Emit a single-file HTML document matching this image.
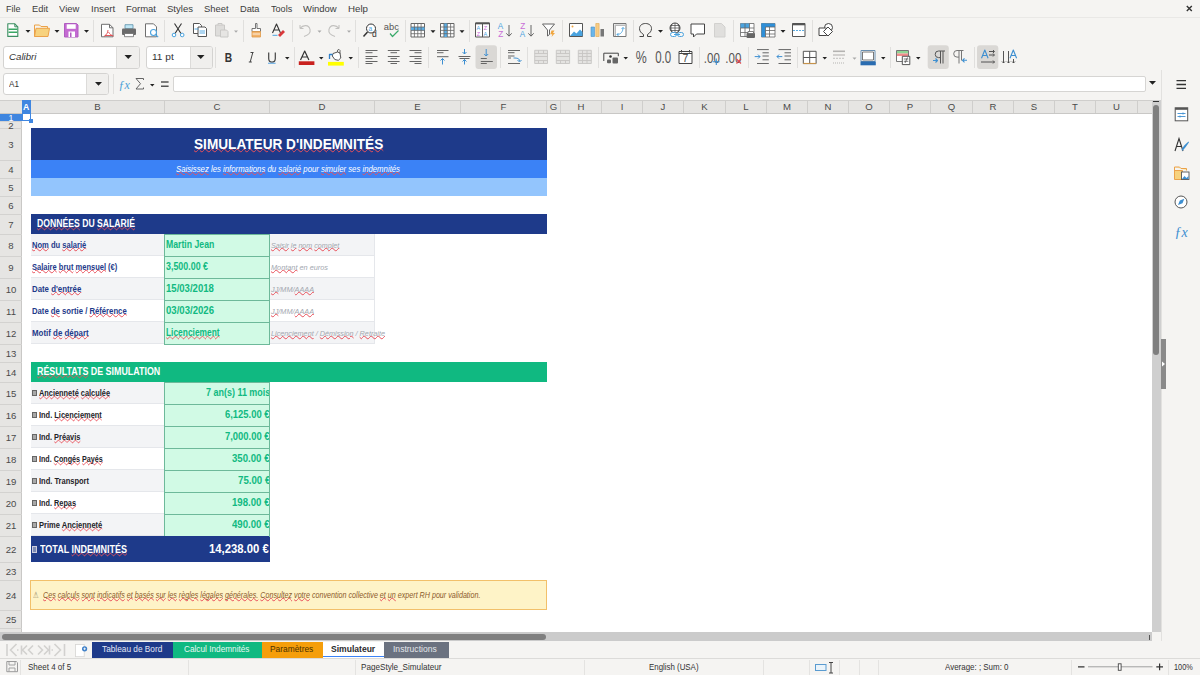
<!DOCTYPE html><html><head><meta charset="utf-8"><style>*{margin:0;padding:0;box-sizing:border-box}html,body{width:1200px;height:675px;overflow:hidden;background:#f5f4f2;font-family:"Liberation Sans",sans-serif;position:relative}.a{position:absolute}.t{position:absolute;white-space:nowrap;transform-origin:0 0}.u{text-decoration:underline wavy #e8505a;text-decoration-thickness:1px;text-underline-offset:-1px;text-decoration-skip-ink:none}svg{position:absolute;overflow:visible}</style></head><body>
<div class="a" style="left:0px;top:17px;width:1200px;height:1px;background:#e9e8e6"></div>
<div class="a" style="left:3px;top:45.5px;width:136.5px;height:23.0px;background:#fff;border:1px solid #d4d3d1;border-radius:3px"></div>
<div class="a" style="left:116px;top:46.5px;width:22.5px;height:21.0px;background:#f0efed;border-left:1px solid #dcdbd9;border-radius:0 2px 2px 0"></div>
<div class="a" style="left:146px;top:45.5px;width:66.5px;height:23.0px;background:#fff;border:1px solid #d4d3d1;border-radius:3px"></div>
<div class="a" style="left:189.5px;top:46.5px;width:22.0px;height:21.0px;background:#f0efed;border-left:1px solid #dcdbd9;border-radius:0 2px 2px 0"></div>
<div class="a" style="left:3.3px;top:72.7px;width:106.2px;height:22.299999999999997px;background:#fff;border:1px solid #d4d3d1;border-radius:3px"></div>
<div class="a" style="left:86.3px;top:73.7px;width:22.200000000000003px;height:20.299999999999997px;background:#f0efed;border-left:1px solid #dcdbd9;border-radius:0 2px 2px 0"></div>
<div class="a" style="left:173.3px;top:76.3px;width:972.7px;height:16.200000000000003px;background:#fff;border:1px solid #d6d5d3;border-radius:2px"></div>
<div class="a" style="left:22px;top:114px;width:1130px;height:518px;background:#fff"></div>
<div class="a" style="left:0px;top:100px;width:1152px;height:14px;background:#e6e5e3;border-top:1px solid #cfcecc;border-bottom:1px solid #c9c8c6"></div>
<div class="a" style="left:30px;top:101px;width:1px;height:12px;background:#cfcecc"></div>
<div class="a" style="left:22px;top:100px;width:9px;height:14px;background:#3f86e0"></div>
<div class="a" style="left:164px;top:101px;width:1px;height:12px;background:#cfcecc"></div>
<div class="a" style="left:269px;top:101px;width:1px;height:12px;background:#cfcecc"></div>
<div class="a" style="left:374px;top:101px;width:1px;height:12px;background:#cfcecc"></div>
<div class="a" style="left:460px;top:101px;width:1px;height:12px;background:#cfcecc"></div>
<div class="a" style="left:546px;top:101px;width:1px;height:12px;background:#cfcecc"></div>
<div class="a" style="left:560px;top:101px;width:1px;height:12px;background:#cfcecc"></div>
<div class="a" style="left:601px;top:101px;width:1px;height:12px;background:#cfcecc"></div>
<div class="a" style="left:642px;top:101px;width:1px;height:12px;background:#cfcecc"></div>
<div class="a" style="left:683px;top:101px;width:1px;height:12px;background:#cfcecc"></div>
<div class="a" style="left:725px;top:101px;width:1px;height:12px;background:#cfcecc"></div>
<div class="a" style="left:766px;top:101px;width:1px;height:12px;background:#cfcecc"></div>
<div class="a" style="left:807px;top:101px;width:1px;height:12px;background:#cfcecc"></div>
<div class="a" style="left:848px;top:101px;width:1px;height:12px;background:#cfcecc"></div>
<div class="a" style="left:889px;top:101px;width:1px;height:12px;background:#cfcecc"></div>
<div class="a" style="left:930px;top:101px;width:1px;height:12px;background:#cfcecc"></div>
<div class="a" style="left:972px;top:101px;width:1px;height:12px;background:#cfcecc"></div>
<div class="a" style="left:1013px;top:101px;width:1px;height:12px;background:#cfcecc"></div>
<div class="a" style="left:1054px;top:101px;width:1px;height:12px;background:#cfcecc"></div>
<div class="a" style="left:1095px;top:101px;width:1px;height:12px;background:#cfcecc"></div>
<div class="a" style="left:1137px;top:101px;width:1px;height:12px;background:#cfcecc"></div>
<div class="a" style="left:0px;top:114px;width:22px;height:518px;background:#e6e5e3;border-right:1px solid #c9c8c6"></div>
<div class="a" style="left:0px;top:121px;width:22px;height:1px;background:#d3d2d0"></div>
<div class="a" style="left:0px;top:114px;width:22px;height:7px;background:#3f86e0"></div>
<div class="a" style="left:0px;top:128px;width:22px;height:1px;background:#d3d2d0"></div>
<div class="a" style="left:0px;top:160px;width:22px;height:1px;background:#d3d2d0"></div>
<div class="a" style="left:0px;top:178px;width:22px;height:1px;background:#d3d2d0"></div>
<div class="a" style="left:0px;top:196px;width:22px;height:1px;background:#d3d2d0"></div>
<div class="a" style="left:0px;top:214px;width:22px;height:1px;background:#d3d2d0"></div>
<div class="a" style="left:0px;top:234px;width:22px;height:1px;background:#d3d2d0"></div>
<div class="a" style="left:0px;top:256px;width:22px;height:1px;background:#d3d2d0"></div>
<div class="a" style="left:0px;top:278px;width:22px;height:1px;background:#d3d2d0"></div>
<div class="a" style="left:0px;top:300px;width:22px;height:1px;background:#d3d2d0"></div>
<div class="a" style="left:0px;top:322px;width:22px;height:1px;background:#d3d2d0"></div>
<div class="a" style="left:0px;top:344px;width:22px;height:1px;background:#d3d2d0"></div>
<div class="a" style="left:0px;top:362px;width:22px;height:1px;background:#d3d2d0"></div>
<div class="a" style="left:0px;top:382px;width:22px;height:1px;background:#d3d2d0"></div>
<div class="a" style="left:0px;top:404px;width:22px;height:1px;background:#d3d2d0"></div>
<div class="a" style="left:0px;top:426px;width:22px;height:1px;background:#d3d2d0"></div>
<div class="a" style="left:0px;top:448px;width:22px;height:1px;background:#d3d2d0"></div>
<div class="a" style="left:0px;top:470px;width:22px;height:1px;background:#d3d2d0"></div>
<div class="a" style="left:0px;top:492px;width:22px;height:1px;background:#d3d2d0"></div>
<div class="a" style="left:0px;top:514px;width:22px;height:1px;background:#d3d2d0"></div>
<div class="a" style="left:0px;top:536px;width:22px;height:1px;background:#d3d2d0"></div>
<div class="a" style="left:0px;top:562px;width:22px;height:1px;background:#d3d2d0"></div>
<div class="a" style="left:0px;top:580px;width:22px;height:1px;background:#d3d2d0"></div>
<div class="a" style="left:0px;top:610px;width:22px;height:1px;background:#d3d2d0"></div>
<div class="a" style="left:0px;top:628px;width:22px;height:1px;background:#d3d2d0"></div>
<div class="a" style="left:22px;top:114px;width:9px;height:7px;border:1px solid #3f86e0;border-top:none"></div>
<div class="a" style="left:29px;top:119px;width:4px;height:4px;background:#3f86e0"></div>
<div class="a" style="left:31px;top:128px;width:516px;height:32px;background:#1e3a8a"></div>
<div class="a" style="left:31px;top:160px;width:516px;height:18px;background:#3b82f6"></div>
<div class="a" style="left:31px;top:178px;width:516px;height:18px;background:#93c5fd"></div>
<div class="a" style="left:31px;top:214px;width:516px;height:20px;background:#1e3a8a"></div>
<div class="a" style="left:31px;top:234px;width:133.5px;height:22px;background:#f3f4f6;border-bottom:1px solid #e5e7eb"></div>
<div class="a" style="left:269.5px;top:234px;width:105.5px;height:22px;background:#f3f4f6;border-bottom:1px solid #e5e7eb;border-right:1px solid #e5e7eb"></div>
<div class="a" style="left:164px;top:234px;width:106px;height:23px;background:#d1fae5;border:1px solid #6db99a"></div>
<div class="a" style="left:31px;top:256px;width:133.5px;height:22px;background:#fff;border-bottom:1px solid #e5e7eb"></div>
<div class="a" style="left:269.5px;top:256px;width:105.5px;height:22px;background:#fff;border-bottom:1px solid #e5e7eb;border-right:1px solid #e5e7eb"></div>
<div class="a" style="left:164px;top:256px;width:106px;height:23px;background:#d1fae5;border:1px solid #6db99a"></div>
<div class="a" style="left:31px;top:278px;width:133.5px;height:22px;background:#f3f4f6;border-bottom:1px solid #e5e7eb"></div>
<div class="a" style="left:269.5px;top:278px;width:105.5px;height:22px;background:#f3f4f6;border-bottom:1px solid #e5e7eb;border-right:1px solid #e5e7eb"></div>
<div class="a" style="left:164px;top:278px;width:106px;height:23px;background:#d1fae5;border:1px solid #6db99a"></div>
<div class="a" style="left:31px;top:300px;width:133.5px;height:22px;background:#fff;border-bottom:1px solid #e5e7eb"></div>
<div class="a" style="left:269.5px;top:300px;width:105.5px;height:22px;background:#fff;border-bottom:1px solid #e5e7eb;border-right:1px solid #e5e7eb"></div>
<div class="a" style="left:164px;top:300px;width:106px;height:23px;background:#d1fae5;border:1px solid #6db99a"></div>
<div class="a" style="left:31px;top:322px;width:133.5px;height:22px;background:#f3f4f6;border-bottom:1px solid #e5e7eb"></div>
<div class="a" style="left:269.5px;top:322px;width:105.5px;height:22px;background:#f3f4f6;border-bottom:1px solid #e5e7eb;border-right:1px solid #e5e7eb"></div>
<div class="a" style="left:164px;top:322px;width:106px;height:23px;background:#d1fae5;border:1px solid #6db99a"></div>
<div class="a" style="left:31px;top:362px;width:516px;height:20px;background:#10b981"></div>
<div class="a" style="left:31px;top:382px;width:133.5px;height:22px;background:#f3f4f6;border-bottom:1px solid #e5e7eb"></div>
<div class="a" style="left:164px;top:382px;width:106px;height:23px;background:#d1fae5;border:1px solid #6db99a"></div>
<div class="a" style="left:32px;top:389.5px;width:5px;height:6.5px;border:1px solid #666;background:#a8a8a8"></div>
<div class="a" style="left:31px;top:404px;width:133.5px;height:22px;background:#fff;border-bottom:1px solid #e5e7eb"></div>
<div class="a" style="left:164px;top:404px;width:106px;height:23px;background:#d1fae5;border:1px solid #6db99a"></div>
<div class="a" style="left:32px;top:411.5px;width:5px;height:6.5px;border:1px solid #666;background:#a8a8a8"></div>
<div class="a" style="left:31px;top:426px;width:133.5px;height:22px;background:#f3f4f6;border-bottom:1px solid #e5e7eb"></div>
<div class="a" style="left:164px;top:426px;width:106px;height:23px;background:#d1fae5;border:1px solid #6db99a"></div>
<div class="a" style="left:32px;top:433.5px;width:5px;height:6.5px;border:1px solid #666;background:#a8a8a8"></div>
<div class="a" style="left:31px;top:448px;width:133.5px;height:22px;background:#fff;border-bottom:1px solid #e5e7eb"></div>
<div class="a" style="left:164px;top:448px;width:106px;height:23px;background:#d1fae5;border:1px solid #6db99a"></div>
<div class="a" style="left:32px;top:455.5px;width:5px;height:6.5px;border:1px solid #666;background:#a8a8a8"></div>
<div class="a" style="left:31px;top:470px;width:133.5px;height:22px;background:#f3f4f6;border-bottom:1px solid #e5e7eb"></div>
<div class="a" style="left:164px;top:470px;width:106px;height:23px;background:#d1fae5;border:1px solid #6db99a"></div>
<div class="a" style="left:32px;top:477.5px;width:5px;height:6.5px;border:1px solid #666;background:#a8a8a8"></div>
<div class="a" style="left:31px;top:492px;width:133.5px;height:22px;background:#fff;border-bottom:1px solid #e5e7eb"></div>
<div class="a" style="left:164px;top:492px;width:106px;height:23px;background:#d1fae5;border:1px solid #6db99a"></div>
<div class="a" style="left:32px;top:499.5px;width:5px;height:6.5px;border:1px solid #666;background:#a8a8a8"></div>
<div class="a" style="left:31px;top:514px;width:133.5px;height:22px;background:#f3f4f6;border-bottom:1px solid #e5e7eb"></div>
<div class="a" style="left:164px;top:514px;width:106px;height:23px;background:#d1fae5;border:1px solid #6db99a"></div>
<div class="a" style="left:32px;top:521.5px;width:5px;height:6.5px;border:1px solid #666;background:#a8a8a8"></div>
<div class="a" style="left:31px;top:536px;width:239px;height:26px;background:#1e3a8a"></div>
<div class="a" style="left:32px;top:546px;width:5px;height:7px;border:1px solid #ccd;background:#7d8bb5"></div>
<div class="a" style="left:30px;top:580px;width:517px;height:30px;background:#fef3c7;border:1px solid #f2c06a"></div>
<div class="a" style="left:1152px;top:100px;width:9px;height:532px;background:#cfcfcf"></div>
<div class="a" style="left:1161px;top:70px;width:1px;height:588px;background:#e2e1df"></div>
<div class="a" style="left:1153px;top:101px;width:6px;height:1px;background:#333"></div>
<div class="a" style="left:1153px;top:105px;width:6px;height:250px;background:#7f7f7f;border-radius:3px"></div>
<div class="a" style="left:0px;top:632px;width:1151.5px;height:10px;background:#cbcbcb"></div>
<div class="a" style="left:2px;top:634px;width:544px;height:6px;background:#7f7f7f;border-radius:3px"></div>
<div class="a" style="left:1148.5px;top:635px;width:1.5px;height:5px;background:#555"></div>
<div class="a" style="left:0px;top:641px;width:1162px;height:17px;background:#f5f4f2"></div>
<div class="a" style="left:92px;top:641.8px;width:81px;height:15.900000000000091px;background:#1e3a8a"></div>
<div class="a" style="left:173px;top:641.8px;width:89px;height:15.900000000000091px;background:#10b981"></div>
<div class="a" style="left:262px;top:641.8px;width:60.5px;height:15.900000000000091px;background:#f59e0b"></div>
<div class="a" style="left:322.5px;top:641.8px;width:61.25px;height:15.900000000000091px;background:#fff"></div>
<div class="a" style="left:383.75px;top:641.8px;width:65.0px;height:15.900000000000091px;background:#6b7280"></div>
<div class="a" style="left:322.5px;top:655.8px;width:61.25px;height:1.6000000000000227px;background:#3b82f6"></div>
<div class="a" style="left:0px;top:658px;width:1200px;height:17px;background:#f5f4f2;border-top:1px solid #dcdbd9"></div>
<div class="a" style="left:20px;top:660px;width:1px;height:15px;background:#e4e3e1"></div>
<div class="a" style="left:188px;top:660px;width:1px;height:15px;background:#e4e3e1"></div>
<div class="a" style="left:355px;top:660px;width:1px;height:15px;background:#e4e3e1"></div>
<div class="a" style="left:583.75px;top:660px;width:1.0px;height:15px;background:#e4e3e1"></div>
<div class="a" style="left:762.5px;top:660px;width:1.0px;height:15px;background:#e4e3e1"></div>
<div class="a" style="left:808.75px;top:660px;width:1.0px;height:15px;background:#e4e3e1"></div>
<div class="a" style="left:838.75px;top:660px;width:1.0px;height:15px;background:#e4e3e1"></div>
<div class="a" style="left:858.75px;top:660px;width:1.0px;height:15px;background:#e4e3e1"></div>
<div class="a" style="left:877.5px;top:660px;width:1.0px;height:15px;background:#e4e3e1"></div>
<div class="a" style="left:1071.25px;top:660px;width:1.0px;height:15px;background:#e4e3e1"></div>
<div class="a" style="left:1167.5px;top:660px;width:1.0px;height:15px;background:#e4e3e1"></div>
<div class="a" style="left:1162px;top:70px;width:38px;height:588px;background:#f5f4f2"></div>
<svg style="left:0;top:0" width="1200" height="100" viewBox="0 0 1200 100">
<g fill="none" stroke-linejoin="round">
<!-- separators toolbar 1 -->
<g stroke="#e0dfdd" stroke-width="1">
<path d="M93.5 20V42M164.5 20V42M243.5 20V42M292.5 20V42M355.5 20V42M405.5 20V42M469.5 20V42M562.5 20V42M633.5 20V42M733.5 20V42M812.5 20V42"/>
<path d="M215.5 47V68M294.5 47V68M358.5 47V68M428.5 47V68M500.5 47V68M527.5 47V68M598.5 47V68M699.5 47V68M748.5 47V68M797.5 47V68M890.5 47V68M974.5 47V68"/>
<path d="M113.5 74V94"/>
</g>


<!-- dropdown arrows (black) -->
<g fill="#222" stroke="none">
<path d="M25.5 30h5l-2.5 2.7z M54.5 30h5l-2.5 2.7z M84 30h5l-2.5 2.7z M430.5 30.3h5l-2.5 2.7z M459.5 30.3h5l-2.5 2.7z M658 30h5l-2.5 2.7z M780.5 30h5l-2.5 2.7z"/>
<path d="M285 57h4.5l-2.25 2.5z M319 57h4.5l-2.25 2.5z M348.5 57h4.5l-2.25 2.5z M623.5 57h4.5l-2.25 2.5z M822.5 57h4.5l-2.25 2.5z M881 57h4.5l-2.25 2.5z M916 57h4.5l-2.25 2.5z"/>
<path d="M124.5 55h7.5l-3.75 4z M197 55h7.5l-3.75 4z M95 82h7l-3.5 3.8z M150 84h4.5l-2.25 2.5z M1149 81h7l-3.5 3.8z"/>
</g>
<g fill="#aaa" stroke="none"><path d="M234 30.5h4l-2 2.3z M317.5 30.5h4l-2 2.3z M347 30.5h4l-2 2.3z M852.5 57.5h4l-2 2.3z"/></g>

<!-- New spreadsheet -->
<path d="M7.8 23.8h7l3 3v9.6h-10z" fill="#fff" stroke="#3d8f62" stroke-width="1.1"/>
<path d="M14.8 23.8v3h3" stroke="#3d8f62" stroke-width="1"/>
<path d="M8.5 28.5h8.8v1.6h-8.8zM8.5 31.5h8.8v1.6h-8.8z" fill="#3aa864" stroke="none"/>
<!-- Open folder -->
<path d="M34.5 25h5l1.5 1.5h6.5v2.5" fill="#fdf0cc" stroke="#eba24a" stroke-width="1"/>
<path d="M34.5 25v11.5h13.5l1.5-8.2h-13.5l-1.5 8.2" fill="#f7d27e" stroke="#eba24a" stroke-width="1"/>
<!-- Save -->
<path d="M64.5 23.5h12l1.5 1.5v12h-13.5z" fill="#c46ad2" stroke="#b05cc0" stroke-width="1"/>
<rect x="66.7" y="24.3" width="9" height="4.5" fill="#fff" stroke="none"/>
<rect x="68.5" y="31.5" width="6.5" height="5.5" fill="#fff" stroke="none"/>
<rect x="70" y="32.5" width="1.5" height="4.5" fill="#b05cc0" stroke="none"/>
<!-- PDF -->
<path d="M101.5 24.3h8l3.5 3.5v9h-11.5z" fill="#fff" stroke="#6f6f6f" stroke-width="1"/>
<path d="M109.5 24.3v3.5h3.5" stroke="#6f6f6f"/>
<path d="M108 30c0 3-2 5-4 6.5M108.5 32c1 2 3 3.5 5 4M105 35.5h7" stroke="#e0474c" stroke-width="0.9"/>
<!-- Print -->
<rect x="125" y="24.7" width="8" height="4" fill="#bfe6f5" stroke="#5a8fa8" stroke-width="0.8"/>
<rect x="122" y="28.5" width="14" height="6.5" rx="1" fill="#6b6b6b" stroke="none"/>
<rect x="124.5" y="33.5" width="9" height="3.2" fill="#fff" stroke="#6b6b6b" stroke-width="0.8"/>
<!-- Print preview -->
<path d="M145.5 23.8h8l3 3v10h-11z" fill="#fff" stroke="#6f6f6f" stroke-width="1"/>
<circle cx="153.5" cy="32.5" r="3" fill="#fff" stroke="#4aa3df" stroke-width="1.1"/>
<path d="M155.6 34.6l2.6 2.6" stroke="#4aa3df" stroke-width="1.2"/>
<!-- Cut -->
<path d="M174.5 23.5l6.5 10M181.5 23.5l-6.5 10" stroke="#333" stroke-width="1.1"/>
<circle cx="174" cy="35" r="1.8" fill="#fff" stroke="#4aa3df" stroke-width="1"/>
<circle cx="182.2" cy="35" r="1.8" fill="#fff" stroke="#4aa3df" stroke-width="1"/>
<!-- Copy -->
<path d="M193.5 23.5h6l2 2v8h-8z" fill="#fff" stroke="#555" stroke-width="1"/>
<path d="M198 27h7l1.5 1.5v8h-8.5z" fill="#fff" stroke="#555" stroke-width="1"/>
<path d="M194.5 29h4M199.5 31h5.5M199.5 33h5.5" stroke="#4aa3df" stroke-width="0.9"/>
<!-- Paste disabled -->
<path d="M215.5 25h9v11h-9z" fill="#dedddb" stroke="#c9c8c6" stroke-width="1"/>
<path d="M220.5 30h6l1.5 1.5v5.5h-7.5z" fill="#e6e5e3" stroke="#c9c8c6" stroke-width="1"/>
<path d="M218 25v-1.5h4v1.5" stroke="#c9c8c6"/>
<!-- Clone brush -->
<path d="M255.5 23.5h1.5v5h3.5v3h-8.5v-3h3.5z" fill="#fff" stroke="#666" stroke-width="0.9"/>
<path d="M252 31.5h8.5v5.5h-8.5z" fill="#f2b36b" stroke="#e09a4a" stroke-width="0.8"/>
<path d="M252.5 34h7.5" stroke="#fff" stroke-width="0.8"/>
<!-- Clear formatting -->
<path d="M272.5 33l4-9 4 9M274 30h5" stroke="#333" stroke-width="1.1"/>
<path d="M272.5 35.3h5" stroke="#4aa3df" stroke-width="1"/>
<path d="M278 35l5-5 2 2-5 5z" fill="#d9383a" stroke="none"/>
<!-- Undo / redo disabled -->
<path d="M300 28.5c3-4 9-4 10 1 1 4-3 6-6 7M300 28.5v-3.5M300 28.5h3.5" stroke="#c2c1bf" stroke-width="1.1"/>
<path d="M339 28.5c-3-4-9-4-10 1-1 4 3 6 6 7M339 28.5v-3.5M339 28.5h-3.5" stroke="#c2c1bf" stroke-width="1.1"/>
<!-- Find & replace -->
<circle cx="371" cy="28.5" r="4.5" fill="#fff" stroke="#333" stroke-width="1"/>
<text x="368.6" y="31" font-size="6.5" fill="#4aa3df" stroke="none" font-family="Liberation Sans">a</text>
<path d="M367.5 32l-4 4.5" stroke="#333" stroke-width="1.5"/>
<text x="372" y="37.2" font-size="8.5" fill="#333" stroke="none" font-family="Liberation Sans">d</text>
<!-- Spelling -->
<text x="383.8" y="30.3" font-size="8.8" fill="#555" stroke="none" font-family="Liberation Sans" textLength="15" lengthAdjust="spacingAndGlyphs">abc</text>
<path d="M390 33.5l2.5 3 6-6" stroke="#3aaa6a" stroke-width="1.2"/>
<!-- Rows table -->
<g stroke="#666" stroke-width="0.8">
<rect x="411" y="23.5" width="13.5" height="13.5" fill="#fff" stroke-width="1"/>
<rect x="411" y="27" width="13.5" height="3.4" fill="#5cb0e8" stroke="none"/>
<path d="M411 27H424.5M411 30.4H424.5M411 33.7H424.5M414.4 23.5V37M417.8 23.5V37M421.1 23.5V37" />
</g>
<!-- Cols table -->
<g stroke="#666" stroke-width="0.8">
<rect x="440.5" y="23.5" width="13.5" height="13.5" fill="#fff" stroke-width="1"/>
<rect x="443.9" y="23.5" width="3.4" height="13.5" fill="#5cb0e8" stroke="none"/>
<path d="M440.5 27H454M440.5 30.4H454M440.5 33.7H454M443.9 23.5V37M447.3 23.5V37M450.6 23.5V37"/>
</g>
<!-- Sort -->
<rect x="475.5" y="23" width="14" height="14" fill="#fff" stroke="#555" stroke-width="1"/>
<rect x="475.5" y="22.5" width="14" height="1.8" fill="#555" stroke="none"/>
<path d="M482.5 23v14" stroke="#555"/>
<text x="476.5" y="29.5" font-size="5.5" fill="#4aa3df" stroke="none" font-family="Liberation Sans">A</text>
<text x="476.7" y="35.5" font-size="5.5" fill="#c86dd7" stroke="none" font-family="Liberation Sans">Z</text>
<text x="483.7" y="29.5" font-size="5.5" fill="#c86dd7" stroke="none" font-family="Liberation Sans">Z</text>
<text x="483.5" y="35.5" font-size="5.5" fill="#4aa3df" stroke="none" font-family="Liberation Sans">A</text>
<!-- Sort asc -->
<text x="497.8" y="29.2" font-size="8.2" fill="#4aa3df" stroke="none" font-family="Liberation Sans">A</text>
<text x="498.2" y="36.7" font-size="8.2" fill="#c86dd7" stroke="none" font-family="Liberation Sans">Z</text>
<path d="M509 25v11M506.3 33.3l2.7 2.9 2.7-2.9" stroke="#555" stroke-width="0.9"/>
<!-- Sort desc -->
<text x="520.2" y="29.2" font-size="8.2" fill="#c86dd7" stroke="none" font-family="Liberation Sans">Z</text>
<text x="519.8" y="36.7" font-size="8.2" fill="#4aa3df" stroke="none" font-family="Liberation Sans">A</text>
<path d="M531 25v11M528.3 33.3l2.7 2.9 2.7-2.9" stroke="#555" stroke-width="0.9"/>
<!-- Autofilter -->
<path d="M542.5 24h12l-5 6v4.5l-2 1.5v-6z" fill="#fff" stroke="#666" stroke-width="1"/>
<path d="M551.5 30.5l3 0-1.5 2.5 2 0-3.5 4 .8-2.8h-2z" fill="#f0a640" stroke="none"/>
<!-- Image -->
<rect x="569.5" y="23.5" width="13" height="13" fill="#fff" stroke="#555" stroke-width="1"/>
<circle cx="572.5" cy="26.5" r="1" fill="#f0a640" stroke="none"/>
<path d="M570 36l4-4.5 2.5 2 3.5-4 2.5 2.5v4z" fill="#4aa3df" stroke="none"/>
<!-- Chart -->
<rect x="591" y="27" width="3.5" height="9.5" fill="#6ab6ea" stroke="#4a90c8" stroke-width="0.6"/>
<rect x="595.8" y="23.5" width="3.3" height="13" fill="#f7cd86" stroke="#e3a850" stroke-width="0.6"/>
<rect x="600.5" y="29" width="3.5" height="7.5" fill="#777" stroke="none"/>
<!-- Pivot -->
<rect x="613.5" y="23.5" width="12.5" height="13" fill="#fff" stroke="#777" stroke-width="1"/>
<path d="M614.5 24.5h11v1.5h-11zM614.5 26v10h1.5v-10z" fill="#bbb" stroke="none"/>
<path d="M617 34.5c4 0 6-3 6-7M621.5 29l1.5-1.5 1.5 1.5M617 34.5l1.5-1.5M617 34.5l1.5 1.5" stroke="#4aa3df" stroke-width="0.9"/>
<!-- Omega -->
<path d="M639.5 36.5h4v-2c-2.5-1.5-4-3.5-4-6 0-3 2.5-5 6-5s6 2 6 5c0 2.5-1.5 4.5-4 6v2h4" stroke="#444" stroke-width="1"/>
<!-- Hyperlink -->
<circle cx="675" cy="28" r="5" fill="#fff" stroke="#444" stroke-width="1"/>
<path d="M670 28h10M675 23v10M672 24c-1.5 2.5-1.5 5.5 0 8M678 24c1.5 2.5 1.5 5.5 0 8M671 25.5h8M671 30.5h8" stroke="#444" stroke-width="0.7"/>
<rect x="670.5" y="32.5" width="6" height="4" rx="2" fill="#fff" stroke="#4aa3df" stroke-width="1"/>
<rect x="677.5" y="32.5" width="6" height="4" rx="2" fill="none" stroke="#4aa3df" stroke-width="1"/>
<path d="M674 34.5h6" stroke="#4aa3df"/>
<!-- Comment -->
<path d="M691 24h13.5v10h-8l-3 3v-3h-2.5z" fill="#fff" stroke="#444" stroke-width="1"/>
<!-- Header disabled -->
<path d="M714.5 23.5h7l3.5 3.5v10h-10.5z" fill="#e0dfdd" stroke="#d2d1cf" stroke-width="1"/>
<!-- Print area -->
<g stroke="#666" stroke-width="0.8">
<rect x="740.5" y="23.5" width="13.5" height="13" fill="#fff"/>
<rect x="740.5" y="23.5" width="9" height="4.5" fill="#4aa3df" stroke="none"/>
<path d="M740.5 28H754M740.5 32.5H754M745 23.5V37M749.5 23.5V37"/>
<rect x="746.5" y="33" width="8.5" height="5" rx="1" fill="#666" stroke="none"/>
<rect x="748" y="31.5" width="5.5" height="2" fill="#fff"/>
</g>
<!-- Freeze -->
<g stroke="#666" stroke-width="0.8">
<rect x="761.5" y="23.5" width="13.5" height="13.5" fill="#fff"/>
<rect x="761.5" y="23.5" width="4" height="13.5" fill="#2f8fd8" stroke="none"/>
<rect x="761.5" y="23.5" width="13.5" height="3.5" fill="#2f8fd8" stroke="none"/>
<path d="M765.5 27H775M765.5 30.5H775M765.5 34H775M765.5 27V37M769.5 27V37"/>
</g>
<!-- Split -->
<rect x="792.5" y="23.5" width="12.5" height="13" fill="#fff" stroke="#555" stroke-width="1"/>
<rect x="792.5" y="23.5" width="12.5" height="1.8" fill="#555" stroke="none"/>
<path d="M793 30.5h11.5" stroke="#4aa3df" stroke-width="0.9" stroke-dasharray="2 1"/>
<!-- Shapes -->
<circle cx="828.5" cy="27.5" r="4" fill="#fff" stroke="#444" stroke-width="1"/>
<rect x="819" y="28" width="7.5" height="7.5" fill="#fff" stroke="#444" stroke-width="1"/>
<path d="M828 27l4.5 4.5-4.5 4.5-4.5-4.5z" fill="#fff" stroke="#444" stroke-width="1"/>
</g>
</svg>
<svg style="left:0;top:0" width="1200" height="100" viewBox="0 0 1200 100">
<g fill="none" stroke-linejoin="round">
<!-- active backgrounds -->
<rect x="475.5" y="45.3" width="21.5" height="23.7" rx="3" fill="#dad8d5" stroke="none"/>
<rect x="927.7" y="45.3" width="21.1" height="23.7" rx="3" fill="#dad8d5" stroke="none"/>
<rect x="977" y="45.3" width="21.3" height="23.7" rx="3" fill="#dad8d5" stroke="none"/>
<!-- B I U -->
<text x="224.8" y="62" font-size="13.6" font-weight="bold" fill="#333" stroke="none" font-family="Liberation Sans" textLength="7.4" lengthAdjust="spacingAndGlyphs">B</text>
<path d="M250.5 52.5h3M248.8 62h3M252.8 52.5l-2.6 9.5" stroke="#444" stroke-width="1"/>
<path d="M268.7 52.5v6c0 2.5 1.3 3.6 3.3 3.6s3.3-1.1 3.3-3.6v-6" stroke="#444" stroke-width="1.2"/>
<path d="M268 63.3h7.6" stroke="#72b3e6" stroke-width="1.2"/>
<!-- Font color -->
<path d="M300.5 60l4.2-9 4.2 9M302 57h5.5" stroke="#333" stroke-width="1.2"/>
<rect x="298.8" y="61.3" width="15.6" height="3.7" fill="#c9211e" stroke="none"/>
<!-- Highlight -->
<path d="M333 53.5l4.5-1.5 2.5 1 .8 5-2.5 2.3-3.5-.8-2.5-3.5z" fill="#fff" stroke="#444" stroke-width="0.9"/>
<path d="M337.5 52v-1.8l1.5-.8 1 1v3" stroke="#444" stroke-width="0.8"/>
<path d="M329.5 59v-4.5h3" stroke="#2f7fc8" stroke-width="1.3"/>
<rect x="328" y="61.9" width="15.8" height="3.7" fill="#ffff00" stroke="none"/>
<!-- Align left/center/right -->
<g stroke="#666" stroke-width="1">
<path d="M365.5 50.5h12M365.5 52.7h7M365.5 56.5h12M365.5 58.6h7M365.5 61.5h12M365.5 63.5h7"/>
<path d="M387.8 50.5h11.8M390.5 52.7h6.5M387.8 56.5h11.8M390.5 58.6h6.5M387.8 61.5h11.8M390.5 63.5h6.5"/>
<path d="M409.5 50.5h12M414.5 52.7h7M409.5 56.5h12M414.5 58.6h7M409.5 61.5h12M414.5 63.5h7"/>
<!-- align top -->
<path d="M437 50.5h11.5M437 52.7h6.5M437 56.7h11.5"/>
<!-- center v -->
<path d="M458.5 56.5h12M459.5 58.5h10"/>
<!-- bottom -->
<path d="M480.8 58.5h6M480.8 61.5h12M480.8 63.5h6"/>
<!-- wrap -->
<path d="M508 50.5h12M508 52.7h6.5M508 56h6.5M508 58h3M508 63.5h12"/>
</g>
<g stroke="#3d8fd1" stroke-width="1">
<path d="M442.5 64.5v-6M440.5 60.5l2-2 2 2"/>
<path d="M464.5 49v5M462.5 52l2 2 2-2M464.5 64.5v-5M462.5 61.5l2-2 2 2"/>
<path d="M486.2 49v7M484.2 54l2 2 2-2"/>
<path d="M513.5 58c4 0 6 .5 6 3M517.5 60l2 2 2-2"/>
</g>
<!-- Merge disabled -->
<g stroke="#c6c5c3" stroke-width="0.9" fill="#e4e3e1">
<rect x="534.7" y="50.3" width="12.8" height="13.2"/>
<path d="M534.7 53.5h12.8M534.7 56.5h12.8M534.7 60.5h12.8M538.5 50.3v3.2M543.5 50.3v3.2M538.5 60.5v3M543.5 60.5v3" fill="none"/>
<rect x="556.3" y="50.3" width="13.3" height="13.2"/>
<path d="M556.3 53.5h13.3M556.3 56.5h13.3M556.3 60.5h13.3M560.5 50.3v3.2M565.5 50.3v3.2M560.5 60.5v3M565.5 60.5v3" fill="none"/>
<rect x="578.3" y="50.3" width="13" height="13.2"/>
<path d="M578.3 53.5h13M578.3 56.5h13M578.3 60.5h13M582.5 50.3v13.2M587 50.3v13.2" fill="none"/>
</g>
<!-- Currency -->
<path d="M603.8 61V53.2h14.5v3" stroke="#444" stroke-width="1"/>
<circle cx="610.5" cy="56.5" r="1.3" fill="#333" stroke="none"/>
<rect x="607" y="59.5" width="4" height="3.8" rx="1" fill="#666" stroke="none"/>
<rect x="612.5" y="57.5" width="5.5" height="6" rx="1" fill="#666" stroke="none"/>
<!-- % -->
<text x="635.8" y="63.2" font-size="16.5" fill="#555" stroke="none" font-family="Liberation Sans" textLength="11" lengthAdjust="spacingAndGlyphs">%</text>
<text x="655.2" y="63.2" font-size="16.5" fill="#555" stroke="none" font-family="Liberation Sans" textLength="16" lengthAdjust="spacingAndGlyphs">0.0</text>
<!-- Date -->
<rect x="679" y="51.5" width="13" height="12" fill="#fff" stroke="#444" stroke-width="1"/>
<path d="M679 53.5h13M681.5 50v2.5M689.5 50v2.5" stroke="#444" stroke-width="1"/>
<text x="682.6" y="62.3" font-size="10.5" fill="#444" stroke="none" font-family="Liberation Sans">7</text>
<!-- .00+ .00x -->
<text x="703.8" y="62.8" font-size="15.5" fill="#555" stroke="none" font-family="Liberation Sans" textLength="16" lengthAdjust="spacingAndGlyphs">.00</text>
<path d="M716.3 58.5v6.5M713 61.8h6.5" stroke="#3d8fd1" stroke-width="1.1"/>
<text x="725.3" y="62.8" font-size="15.5" fill="#555" stroke="none" font-family="Liberation Sans" textLength="16" lengthAdjust="spacingAndGlyphs">.00</text>
<path d="M736.5 59l4.5 4.5M741 59l-4.5 4.5" stroke="#e0474c" stroke-width="1.1"/>
<!-- indent -->
<g stroke="#666" stroke-width="1">
<path d="M757 49.6h11.8M762.5 52.8h6.3M762.5 56h6.3M762.5 59.8h6.3M757 63.5h11.8"/>
<path d="M778.5 49.6h12.5M784.5 52.8h6.5M784.5 56h6.5M784.5 59.8h6.5M778.5 63.5h12.5"/>
</g>
<g stroke="#3d8fd1" stroke-width="1">
<path d="M754.7 56.6h5.3M758 54.6l2 2-2 2"/>
<path d="M777 56.6h5.3M779 54.6l-2 2 2 2"/>
</g>
<!-- Borders -->
<rect x="803.3" y="51.3" width="12.8" height="12.3" fill="#fff" stroke="#555" stroke-width="1"/>
<path d="M809.7 51.3v12.3M803.3 57.5h12.8" stroke="#555" stroke-width="1"/>
<path d="M803.3 63.4h12.8" stroke="#f0a640" stroke-width="0.8"/>
<!-- Border style disabled -->
<g stroke="#b4b3b1">
<path d="M833 51.3h12" stroke-width="1.6"/>
<path d="M833 55h12" stroke-width="1.1"/>
<path d="M833 58.3h12" stroke-dasharray="2 1" stroke-width="0.8"/>
<path d="M833 63h12" stroke-dasharray="1 1" stroke-width="1"/>
</g>
<!-- Border color -->
<rect x="861" y="50.5" width="14" height="11" fill="#fff" stroke="#6a8fb0" stroke-width="1"/>
<rect x="862.5" y="52" width="11" height="8" fill="#fff" stroke="#555" stroke-width="0.8"/>
<rect x="860.5" y="61.5" width="15.3" height="3.8" fill="#2a6cb0" stroke="none"/>
<!-- Conditional -->
<rect x="896.5" y="50.5" width="12" height="11" fill="#fff" stroke="#666" stroke-width="0.9"/>
<rect x="897" y="51" width="11" height="2.5" fill="#8fd694" stroke="none"/>
<rect x="897" y="53.5" width="11" height="2.5" fill="#f08c8c" stroke="none"/>
<rect x="902.3" y="56.3" width="7.5" height="8.3" fill="#fff" stroke="#444" stroke-width="0.9"/>
<path d="M903.8 59h4.5M903.8 61.3h4.5M907.5 57.5l-2.5 5.5" stroke="#444" stroke-width="0.7"/>
<!-- LTR para -->
<path d="M945 51h-6.5a3.3 3.3 0 0 0 0 6.6h2M940.5 51v12.5M943 51v12.5" stroke="#555" stroke-width="1"/>
<path d="M933 60.5h4.5M935.5 58.5l2 2-2 2" stroke="#3d8fd1" stroke-width="1.1"/>
<!-- RTL para -->
<path d="M963.5 50.5h-6.5a3.3 3.3 0 0 0 0 6.6h2M959 50.5v13M961.5 50.5v10" stroke="#777" stroke-width="1"/>
<path d="M967 60.3h-4.5M964.5 58.3l-2 2 2 2" stroke="#3d8fd1" stroke-width="1.1"/>
<!-- A→ -->
<path d="M981.5 58.3l3.3-8.3 3.3 8.3M982.7 55.5h4.2" stroke="#3d8fd1" stroke-width="1.1"/>
<path d="M989 51.5h5M993 50l1.5 1.5-1.5 1.5M989 55h5M993 53.5l1.5 1.5-1.5 1.5M981 62h13.5M993 60.5l1.5 1.5-1.5 1.5" stroke="#444" stroke-width="0.9"/>
<!-- TB -->
<path d="M1003.5 51v12M1002 61.5l1.5 1.5 1.5-1.5M1008.5 51v12M1007 61.5l1.5 1.5 1.5-1.5M1013.5 59v4M1012 61.5l1.5 1.5 1.5-1.5" stroke="#444" stroke-width="0.9"/>
<path d="M1010 58.3l3.3-8.3 3.3 8.3M1011.2 55.5h4.2" stroke="#3d8fd1" stroke-width="1.1"/>
<!-- Formula bar -->
<text x="118.5" y="88.5" font-size="12" font-style="italic" fill="#4a9fd8" stroke="none" font-family="Liberation Serif">ƒx</text>
<path d="M143.5 80V78.5h-7.5l4.5 5.2-4.5 5.3h7.5v-1.5" stroke="#555" stroke-width="0.9"/>
<path d="M161 82h7.6M161 86.2h7.6" stroke="#555" stroke-width="1.4"/>
</g>
</svg>
<!-- sidebar icons -->
<svg style="left:0;top:0" width="1200" height="675" viewBox="0 0 1200 675">
<g fill="none">
<path d="M1176.5 80.7h9.5M1176.5 84.5h9.5M1176.5 88.3h9.5" stroke="#333" stroke-width="1.3"/>
<rect x="1175.2" y="107.8" width="12.5" height="13" fill="#fff" stroke="#555" stroke-width="1"/>
<rect x="1175.2" y="107.8" width="12.5" height="2" fill="#555"/>
<path d="M1177.5 113.5h8M1177.5 116.5h8" stroke="#3d8fd1" stroke-width="0.9"/>
<path d="M1183 112.5v2M1180 115.5v2" stroke="#3d8fd1" stroke-width="0.9"/>
<path d="M1175 151l4-12.5 4 12.5M1176.5 146.5h5" stroke="#333" stroke-width="1.1"/>
<path d="M1181.5 150c1-3 4-6 7-8.5l.5.7c-2 3-4 6-6.5 8.5z" fill="#3d8fd1"/>
<path d="M1174.5 167h5l1.5 1.5h5.5v2" fill="#fbe7b0" stroke="#eba24a"/>
<path d="M1174.5 167v12.5h8v-9h-8" fill="#f7d27e" stroke="#eba24a"/>
<rect x="1181.5" y="172" width="7.5" height="7.5" fill="#fff" stroke="#555" stroke-width="0.9"/>
<path d="M1182 179l2.5-3 2 2 2-2v3z" fill="#3d8fd1"/>
<circle cx="1181" cy="202" r="6" fill="#fff" stroke="#555" stroke-width="1"/>
<path d="M1178 205l1.8-4.5 4.5-1.8-1.8 4.5z" fill="#3d8fd1"/>
<text x="1174.5" y="236.5" font-size="14" font-style="italic" fill="#3d8fd1" font-family="Liberation Serif">ƒx</text>
<!-- close x -->
<path d="M1186.8 6l5 5M1191.8 6l-5 5" stroke="#333" stroke-width="1.4"/>
</g>
</svg>
<svg style="left:0;top:0" width="1200" height="675" viewBox="0 0 1200 675">
<g fill="none">
<!-- tab nav -->
<g stroke="#d2d1cf" stroke-width="1.6">
<path d="M7 644v12M16.5 644l-6 6 6 6M17 650h1.5"/>
<path d="M21.5 645.5v9M27 645.5l-4.5 4.5 4.5 4.5M33 645.5l-4.5 4.5 4.5 4.5"/>
<path d="M38 645.5l4.5 4.5-4.5 4.5M44 645.5l4.5 4.5-4.5 4.5M49.5 645.5v9"/>
<path d="M54.5 644l6 6-6 6M64.5 644v12M51.5 650h1.5"/>
</g>
<rect x="75.5" y="644.5" width="8.7" height="12.2" fill="#fff" stroke="#d6d5d3" stroke-width="0.8"/>
<circle cx="84.6" cy="648.8" r="2.6" fill="#3d7fc8"/>
<path d="M83.3 648.8h2.6M84.6 647.5v2.6" stroke="#fff" stroke-width="0.8"/>
<!-- status save -->
<path d="M6.8 661.5h9.5l1.2 1.2v9h-10.7z" stroke="#9a9a9a" stroke-width="1"/>
<path d="M9 662v3h6v-3M9 671.5v-3.5h6v3.5" stroke="#9a9a9a" stroke-width="0.9"/>
<!-- view icon -->
<rect x="815.5" y="664.5" width="10.5" height="6" fill="#eaf4fb" stroke="#5a9bd0" stroke-width="1"/>
<path d="M831 662.5v10.5M829 662.5h4M829 673h4" stroke="#333" stroke-width="0.9"/>
<!-- zoom -->
<path d="M1078 666.8h6.5M1156.3 666.8h6.7M1159.6 663.5v6.7" stroke="#333" stroke-width="1.2"/>
<path d="M1088 666.8h64.5" stroke="#a0a0a0" stroke-width="1"/>
<rect x="1118.3" y="663.8" width="2.8" height="6.5" fill="#fff" stroke="#444" stroke-width="0.9"/>
<!-- sidebar handle arrow -->
<path d="M1162 361.5l3 2.5-3 2.5z" fill="#fff"/>
</g>
</svg>

<div class="t" id="t0" style="left:5.50px;top:4.00px;font-size:9.30px;line-height:11px;color:#3c3c3c;transform:scaleX(0.9677);">File</div>
<div class="t" id="t1" style="left:31.70px;top:4.00px;font-size:9.30px;line-height:11px;color:#3c3c3c;transform:scaleX(1.0043);">Edit</div>
<div class="t" id="t2" style="left:58.70px;top:4.00px;font-size:9.30px;line-height:11px;color:#3c3c3c;transform:scaleX(1.0158);">View</div>
<div class="t" id="t3" style="left:90.80px;top:4.00px;font-size:9.30px;line-height:11px;color:#3c3c3c;transform:scaleX(1.0402);">Insert</div>
<div class="t" id="t4" style="left:125.80px;top:4.00px;font-size:9.30px;line-height:11px;color:#3c3c3c;transform:scaleX(1.0186);">Format</div>
<div class="t" id="t5" style="left:167.00px;top:4.00px;font-size:9.30px;line-height:11px;color:#3c3c3c;transform:scaleX(1.0265);">Styles</div>
<div class="t" id="t6" style="left:204.20px;top:4.00px;font-size:9.30px;line-height:11px;color:#3c3c3c;transform:scaleX(1.0084);">Sheet</div>
<div class="t" id="t7" style="left:239.70px;top:4.00px;font-size:9.30px;line-height:11px;color:#3c3c3c;transform:scaleX(0.9928);">Data</div>
<div class="t" id="t8" style="left:270.80px;top:4.00px;font-size:9.30px;line-height:11px;color:#3c3c3c;transform:scaleX(0.9768);">Tools</div>
<div class="t" id="t9" style="left:303.30px;top:4.00px;font-size:9.30px;line-height:11px;color:#3c3c3c;transform:scaleX(1.0188);">Window</div>
<div class="t" id="t10" style="left:348.30px;top:4.00px;font-size:9.30px;line-height:11px;color:#3c3c3c;transform:scaleX(1.0458);">Help</div>
<div class="t" id="t11" style="left:9.40px;top:51.00px;font-size:9.45px;line-height:11px;color:#333;font-style:italic;transform:scaleX(1.0280);">Calibri</div>
<div class="t" id="t12" style="left:152.00px;top:51.00px;font-size:9.45px;line-height:11px;color:#333;transform:scaleX(1.0716);">11 pt</div>
<div class="t" id="t13" style="left:9.20px;top:80.00px;font-size:8.28px;line-height:10px;color:#333;transform:scaleX(0.9877);">A1</div>
<div class="t" id="t14" style="left:23.30px;top:101.00px;font-size:9.59px;line-height:12px;color:#fff;font-weight:bold;transform:scaleX(0.9102);">A</div>
<div class="t" id="t15" style="left:94.30px;top:101.00px;font-size:9.59px;line-height:12px;color:#4a4a4a;">B</div>
<div class="t" id="t16" style="left:213.54px;top:101.00px;font-size:9.59px;line-height:12px;color:#4a4a4a;">C</div>
<div class="t" id="t17" style="left:318.54px;top:101.00px;font-size:9.59px;line-height:12px;color:#4a4a4a;">D</div>
<div class="t" id="t18" style="left:414.30px;top:101.00px;font-size:9.59px;line-height:12px;color:#4a4a4a;">E</div>
<div class="t" id="t19" style="left:500.57px;top:101.00px;font-size:9.59px;line-height:12px;color:#4a4a4a;">F</div>
<div class="t" id="t20" style="left:549.77px;top:101.00px;font-size:9.59px;line-height:12px;color:#4a4a4a;">G</div>
<div class="t" id="t21" style="left:577.54px;top:101.00px;font-size:9.59px;line-height:12px;color:#4a4a4a;">H</div>
<div class="t" id="t22" style="left:620.66px;top:101.00px;font-size:9.59px;line-height:12px;color:#4a4a4a;">I</div>
<div class="t" id="t23" style="left:660.60px;top:101.00px;font-size:9.59px;line-height:12px;color:#4a4a4a;">J</div>
<div class="t" id="t24" style="left:701.30px;top:101.00px;font-size:9.59px;line-height:12px;color:#4a4a4a;">K</div>
<div class="t" id="t25" style="left:743.34px;top:101.00px;font-size:9.59px;line-height:12px;color:#4a4a4a;">L</div>
<div class="t" id="t26" style="left:783.01px;top:101.00px;font-size:9.59px;line-height:12px;color:#4a4a4a;">M</div>
<div class="t" id="t27" style="left:824.54px;top:101.00px;font-size:9.59px;line-height:12px;color:#4a4a4a;">N</div>
<div class="t" id="t28" style="left:865.27px;top:101.00px;font-size:9.59px;line-height:12px;color:#4a4a4a;">O</div>
<div class="t" id="t29" style="left:906.80px;top:101.00px;font-size:9.59px;line-height:12px;color:#4a4a4a;">P</div>
<div class="t" id="t30" style="left:947.77px;top:101.00px;font-size:9.59px;line-height:12px;color:#4a4a4a;">Q</div>
<div class="t" id="t31" style="left:989.54px;top:101.00px;font-size:9.59px;line-height:12px;color:#4a4a4a;">R</div>
<div class="t" id="t32" style="left:1030.80px;top:101.00px;font-size:9.59px;line-height:12px;color:#4a4a4a;">S</div>
<div class="t" id="t33" style="left:1072.07px;top:101.00px;font-size:9.59px;line-height:12px;color:#4a4a4a;">T</div>
<div class="t" id="t34" style="left:1113.04px;top:101.00px;font-size:9.59px;line-height:12px;color:#4a4a4a;">U</div>
<div class="t" id="t35" style="left:8.57px;top:113.00px;font-size:8.72px;line-height:10px;color:#fff;">1</div>
<div class="t" id="t36" style="left:8.34px;top:120.00px;font-size:9.59px;line-height:12px;color:#4a4a4a;">2</div>
<div class="t" id="t37" style="left:8.34px;top:139.00px;font-size:9.59px;line-height:12px;color:#4a4a4a;">3</div>
<div class="t" id="t38" style="left:8.34px;top:164.00px;font-size:9.59px;line-height:12px;color:#4a4a4a;">4</div>
<div class="t" id="t39" style="left:8.34px;top:182.00px;font-size:9.59px;line-height:12px;color:#4a4a4a;">5</div>
<div class="t" id="t40" style="left:8.34px;top:200.00px;font-size:9.59px;line-height:12px;color:#4a4a4a;">6</div>
<div class="t" id="t41" style="left:8.34px;top:219.00px;font-size:9.59px;line-height:12px;color:#4a4a4a;">7</div>
<div class="t" id="t42" style="left:8.34px;top:240.00px;font-size:9.59px;line-height:12px;color:#4a4a4a;">8</div>
<div class="t" id="t43" style="left:8.34px;top:262.00px;font-size:9.59px;line-height:12px;color:#4a4a4a;">9</div>
<div class="t" id="t44" style="left:5.67px;top:284.00px;font-size:9.59px;line-height:12px;color:#4a4a4a;">10</div>
<div class="t" id="t45" style="left:6.02px;top:306.00px;font-size:9.59px;line-height:12px;color:#4a4a4a;">11</div>
<div class="t" id="t46" style="left:5.67px;top:328.00px;font-size:9.59px;line-height:12px;color:#4a4a4a;">12</div>
<div class="t" id="t47" style="left:5.67px;top:348.00px;font-size:9.59px;line-height:12px;color:#4a4a4a;">13</div>
<div class="t" id="t48" style="left:5.67px;top:367.00px;font-size:9.59px;line-height:12px;color:#4a4a4a;">14</div>
<div class="t" id="t49" style="left:5.67px;top:388.00px;font-size:9.59px;line-height:12px;color:#4a4a4a;">15</div>
<div class="t" id="t50" style="left:5.67px;top:410.00px;font-size:9.59px;line-height:12px;color:#4a4a4a;">16</div>
<div class="t" id="t51" style="left:5.67px;top:432.00px;font-size:9.59px;line-height:12px;color:#4a4a4a;">17</div>
<div class="t" id="t52" style="left:5.67px;top:454.00px;font-size:9.59px;line-height:12px;color:#4a4a4a;">18</div>
<div class="t" id="t53" style="left:5.67px;top:476.00px;font-size:9.59px;line-height:12px;color:#4a4a4a;">19</div>
<div class="t" id="t54" style="left:5.67px;top:498.00px;font-size:9.59px;line-height:12px;color:#4a4a4a;">20</div>
<div class="t" id="t55" style="left:5.67px;top:520.00px;font-size:9.59px;line-height:12px;color:#4a4a4a;">21</div>
<div class="t" id="t56" style="left:5.67px;top:544.00px;font-size:9.59px;line-height:12px;color:#4a4a4a;">22</div>
<div class="t" id="t57" style="left:5.67px;top:566.00px;font-size:9.59px;line-height:12px;color:#4a4a4a;">23</div>
<div class="t" id="t58" style="left:5.67px;top:590.00px;font-size:9.59px;line-height:12px;color:#4a4a4a;">24</div>
<div class="t" id="t59" style="left:5.67px;top:614.00px;font-size:9.59px;line-height:12px;color:#4a4a4a;">25</div>
<div class="t" id="t60" style="left:193.75px;top:135.00px;font-size:14.83px;line-height:18px;color:#fff;font-weight:bold;transform:scaleX(0.9190);"><span class="u">SIMULATEUR</span> <span class="u">D'INDEMNITÉS</span></div>
<div class="t" id="t61" style="left:176.00px;top:164.00px;font-size:9.01px;line-height:11px;color:#fff;font-style:italic;transform:scaleX(0.8626);"><span class="u">Saisissez</span> les <span class="u">informations</span> du <span class="u">salarié</span> pour <span class="u">simuler</span> ses <span class="u">indemnités</span></div>
<div class="t" id="t62" style="left:36.90px;top:218.00px;font-size:10.32px;line-height:12px;color:#fff;font-weight:bold;transform:scaleX(0.8384);"><span class="u">DONNÉES</span> DU <span class="u">SALARIÉ</span></div>
<div class="t" id="t63" style="left:32.00px;top:240.00px;font-size:8.72px;line-height:10px;color:#1e3a8a;font-weight:bold;transform:scaleX(0.8670);"><span class="u">Nom</span> du <span class="u">salarié</span></div>
<div class="t" id="t64" style="left:166.00px;top:238.00px;font-size:10.90px;line-height:13px;color:#10b981;font-weight:bold;transform:scaleX(0.7979);">Martin Jean</div>
<div class="t" id="t65" style="left:271.00px;top:241.00px;font-size:7.56px;line-height:9px;color:#a3a8b0;font-style:italic;transform:scaleX(0.9459);"><span class="u">Saisir</span> <span class="u">le</span> <span class="u">nom</span> <span class="u">complet</span></div>
<div class="t" id="t66" style="left:32.00px;top:262.00px;font-size:8.72px;line-height:10px;color:#1e3a8a;font-weight:bold;transform:scaleX(0.8626);"><span class="u">Salaire</span> <span class="u">brut</span> <span class="u">mensuel</span> (€)</div>
<div class="t" id="t67" style="left:166.00px;top:260.00px;font-size:10.90px;line-height:13px;color:#10b981;font-weight:bold;transform:scaleX(0.8158);">3,500.00 €</div>
<div class="t" id="t68" style="left:271.00px;top:263.00px;font-size:7.56px;line-height:9px;color:#a3a8b0;font-style:italic;transform:scaleX(0.9702);"><span class="u">Montant</span> en euros</div>
<div class="t" id="t69" style="left:32.00px;top:284.00px;font-size:8.72px;line-height:10px;color:#1e3a8a;font-weight:bold;transform:scaleX(0.8979);">Date <span class="u">d'entrée</span></div>
<div class="t" id="t70" style="left:166.00px;top:282.00px;font-size:10.90px;line-height:13px;color:#10b981;font-weight:bold;transform:scaleX(0.8786);">15/03/2018</div>
<div class="t" id="t71" style="left:271.00px;top:285.00px;font-size:7.56px;line-height:9px;color:#a3a8b0;font-style:italic;transform:scaleX(0.9670);"><span class="u">JJ</span>/MM/<span class="u">AAAA</span></div>
<div class="t" id="t72" style="left:32.00px;top:306.00px;font-size:8.72px;line-height:10px;color:#1e3a8a;font-weight:bold;transform:scaleX(0.8840);">Date <span class="u">de</span> sortie / <span class="u">Référence</span></div>
<div class="t" id="t73" style="left:166.00px;top:304.00px;font-size:10.90px;line-height:13px;color:#10b981;font-weight:bold;transform:scaleX(0.8805);">03/03/2026</div>
<div class="t" id="t74" style="left:271.00px;top:307.00px;font-size:7.56px;line-height:9px;color:#a3a8b0;font-style:italic;transform:scaleX(0.9670);"><span class="u">JJ</span>/MM/<span class="u">AAAA</span></div>
<div class="t" id="t75" style="left:32.00px;top:328.00px;font-size:8.72px;line-height:10px;color:#1e3a8a;font-weight:bold;transform:scaleX(0.9067);">Motif <span class="u">de</span> <span class="u">départ</span></div>
<div class="t" id="t76" style="left:166.00px;top:326.00px;font-size:10.90px;line-height:13px;color:#10b981;font-weight:bold;transform:scaleX(0.7700);"><span class="u">Licenciement</span></div>
<div class="t" id="t77" style="left:271.00px;top:329.00px;font-size:7.56px;line-height:9px;color:#a3a8b0;font-style:italic;transform:scaleX(0.9601);"><span class="u">Licenciement</span> / <span class="u">Démission</span> / <span class="u">Retraite</span></div>
<div class="t" id="t78" style="left:36.75px;top:365.00px;font-size:10.54px;line-height:13px;color:#fff;font-weight:bold;transform:scaleX(0.8437);"><span class="u">RÉSULTATS</span> DE SIMULATION</div>
<div class="t" id="t79" style="left:38.70px;top:388.00px;font-size:9.01px;line-height:11px;color:#1f2328;font-weight:bold;transform:scaleX(0.8202);"><span class="u">Ancienneté</span> <span class="u">calculée</span></div>
<div class="t" id="t80" style="left:205.50px;top:387.00px;font-size:10.32px;line-height:12px;color:#10b981;font-weight:bold;transform:scaleX(0.8695);">7 an(s) 11 mois</div>
<div class="t" id="t81" style="left:38.70px;top:410.00px;font-size:9.01px;line-height:11px;color:#1f2328;font-weight:bold;transform:scaleX(0.8260);">Ind. <span class="u">Licenciement</span></div>
<div class="t" id="t82" style="left:225.20px;top:409.00px;font-size:10.32px;line-height:12px;color:#10b981;font-weight:bold;transform:scaleX(0.9149);">6,125.00 €</div>
<div class="t" id="t83" style="left:38.70px;top:432.00px;font-size:9.01px;line-height:11px;color:#1f2328;font-weight:bold;transform:scaleX(0.8173);">Ind. <span class="u">Préavis</span></div>
<div class="t" id="t84" style="left:225.20px;top:431.00px;font-size:10.32px;line-height:12px;color:#10b981;font-weight:bold;transform:scaleX(0.9149);">7,000.00 €</div>
<div class="t" id="t85" style="left:38.70px;top:454.00px;font-size:9.01px;line-height:11px;color:#1f2328;font-weight:bold;transform:scaleX(0.7956);">Ind. <span class="u">Congés</span> <span class="u">Payés</span></div>
<div class="t" id="t86" style="left:232.30px;top:453.00px;font-size:10.32px;line-height:12px;color:#10b981;font-weight:bold;transform:scaleX(0.9339);">350.00 €</div>
<div class="t" id="t87" style="left:38.70px;top:476.00px;font-size:9.01px;line-height:11px;color:#1f2328;font-weight:bold;transform:scaleX(0.8331);">Ind. Transport</div>
<div class="t" id="t88" style="left:237.50px;top:475.00px;font-size:10.32px;line-height:12px;color:#10b981;font-weight:bold;transform:scaleX(0.9384);">75.00 €</div>
<div class="t" id="t89" style="left:38.70px;top:498.00px;font-size:9.01px;line-height:11px;color:#1f2328;font-weight:bold;transform:scaleX(0.8129);">Ind. <span class="u">Repas</span></div>
<div class="t" id="t90" style="left:232.30px;top:497.00px;font-size:10.32px;line-height:12px;color:#10b981;font-weight:bold;transform:scaleX(0.9339);">198.00 €</div>
<div class="t" id="t91" style="left:38.70px;top:520.00px;font-size:9.01px;line-height:11px;color:#1f2328;font-weight:bold;transform:scaleX(0.8362);">Prime <span class="u">Ancienneté</span></div>
<div class="t" id="t92" style="left:232.30px;top:519.00px;font-size:10.32px;line-height:12px;color:#10b981;font-weight:bold;transform:scaleX(0.9339);">490.00 €</div>
<div class="t" id="t93" style="left:40.00px;top:543.00px;font-size:10.90px;line-height:13px;color:#fff;font-weight:bold;transform:scaleX(0.8262);">TOTAL <span class="u">INDEMNITÉS</span></div>
<div class="t" id="t94" style="left:208.80px;top:542.00px;font-size:12.65px;line-height:15px;color:#fff;font-weight:bold;transform:scaleX(0.8955);">14,238.00 €</div>
<div class="t" id="t95" style="left:32.50px;top:590.00px;font-size:8.72px;line-height:10px;color:#8a7a5a;transform:scaleX(0.6875);">⚠</div>
<div class="t" id="t96" style="left:42.60px;top:591.00px;font-size:8.28px;line-height:10px;color:#8c5a2b;font-style:italic;transform:scaleX(0.8644);"><span class="u">Ces</span> <span class="u">calculs</span> <span class="u">sont</span> <span class="u">indicatifs</span> <span class="u">et</span> <span class="u">basés</span> <span class="u">sur</span> <span class="u">les</span> <span class="u">règles</span> <span class="u">légales</span> <span class="u">générales.</span> <span class="u">Consultez</span> <span class="u">votre</span> convention collective <span class="u">et</span> <span class="u">un</span> expert RH pour validation.</div>
<div class="t" id="t97" style="left:102.00px;top:643.00px;font-size:9.59px;line-height:12px;color:#e3e8f5;transform:scaleX(0.8643);">Tableau de Bord</div>
<div class="t" id="t98" style="left:183.70px;top:643.00px;font-size:9.59px;line-height:12px;color:#e8f8f1;transform:scaleX(0.8603);">Calcul Indemnités</div>
<div class="t" id="t99" style="left:270.00px;top:643.00px;font-size:9.59px;line-height:12px;color:#4a3000;transform:scaleX(0.8745);">Paramètres</div>
<div class="t" id="t100" style="left:330.80px;top:643.00px;font-size:9.59px;line-height:12px;color:#2a2a2a;font-weight:bold;transform:scaleX(0.8929);">Simulateur</div>
<div class="t" id="t101" style="left:393.30px;top:643.00px;font-size:9.59px;line-height:12px;color:#e5e7eb;transform:scaleX(0.8921);">Instructions</div>
<div class="t" id="t102" style="left:27.50px;top:662.00px;font-size:9.16px;line-height:11px;color:#333;transform:scaleX(0.8757);">Sheet 4 of 5</div>
<div class="t" id="t103" style="left:361.25px;top:662.00px;font-size:9.16px;line-height:11px;color:#333;transform:scaleX(0.8884);">PageStyle_Simulateur</div>
<div class="t" id="t104" style="left:648.75px;top:662.00px;font-size:9.16px;line-height:11px;color:#333;transform:scaleX(0.8609);">English (USA)</div>
<div class="t" id="t105" style="left:944.50px;top:662.00px;font-size:9.16px;line-height:11px;color:#333;transform:scaleX(0.8684);">Average: ; Sum: 0</div>
<div class="t" id="t106" style="left:1173.75px;top:662.00px;font-size:9.16px;line-height:11px;color:#333;transform:scaleX(0.8005);">100%</div>
<div class="a" style="left:269px;top:382px;width:1px;height:23px;background:#6db99a"></div>
<div class="a" style="left:270px;top:382px;width:6px;height:23px;background:#fff"></div>
<div class="a" style="left:269px;top:404px;width:1px;height:23px;background:#6db99a"></div>
<div class="a" style="left:270px;top:404px;width:6px;height:23px;background:#fff"></div>
<div class="a" style="left:269px;top:426px;width:1px;height:23px;background:#6db99a"></div>
<div class="a" style="left:270px;top:426px;width:6px;height:23px;background:#fff"></div>
<div class="a" style="left:269px;top:448px;width:1px;height:23px;background:#6db99a"></div>
<div class="a" style="left:270px;top:448px;width:6px;height:23px;background:#fff"></div>
<div class="a" style="left:269px;top:470px;width:1px;height:23px;background:#6db99a"></div>
<div class="a" style="left:270px;top:470px;width:6px;height:23px;background:#fff"></div>
<div class="a" style="left:269px;top:492px;width:1px;height:23px;background:#6db99a"></div>
<div class="a" style="left:270px;top:492px;width:6px;height:23px;background:#fff"></div>
<div class="a" style="left:269px;top:514px;width:1px;height:23px;background:#6db99a"></div>
<div class="a" style="left:270px;top:514px;width:6px;height:23px;background:#fff"></div>
<div class="a" style="left:1161px;top:339px;width:4.5px;height:50px;background:#8a8a8a"></div><svg style="left:0;top:0" width="1200" height="675"><path d="M1162 361.5l3 2.5-3 2.5z" fill="#fff"/></svg>
</body></html>
